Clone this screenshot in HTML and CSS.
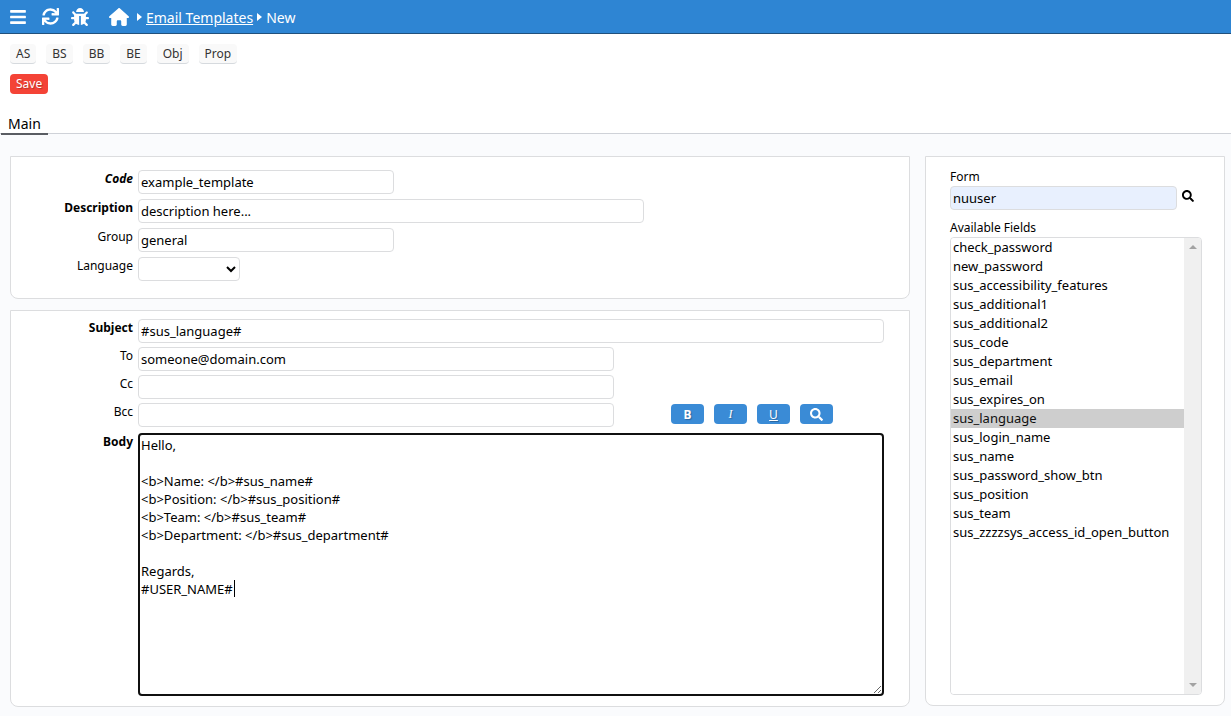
FILE: index.html
```html
<!DOCTYPE html>
<html lang="en">
<head>
<meta charset="utf-8">
<title>Email Templates</title>
<link rel="stylesheet" href="styles.css">
</head>
<body>
<header class="topbar">
  <button class="icon-btn menu" aria-label="Menu"><svg viewBox="0 0 448 512" width="16" height="18"><path d="M16 132h416c9 0 16-7 16-16V76c0-9-7-16-16-16H16C7 60 0 67 0 76v40c0 9 7 16 16 16zm0 160h416c9 0 16-7 16-16v-40c0-9-7-16-16-16H16c-9 0-16 7-16 16v40c0 9 7 16 16 16zm0 160h416c9 0 16-7 16-16v-40c0-9-7-16-16-16H16c-9 0-16 7-16 16v40c0 9 7 16 16 16z"/></svg></button>
  <button class="icon-btn refresh" aria-label="Refresh"><svg viewBox="0 0 512 512" width="17" height="17"><path d="M440.65 12.57l4 82.77A247.16 247.16 0 0 0 255.83 8C134.73 8 33.91 94.92 12.29 209.82A12 12 0 0 0 24.09 224h49.05a12 12 0 0 0 11.67-9.26 175.91 175.91 0 0 1 317-56.94l-101.46-4.86a12 12 0 0 0-12.57 12v47.41a12 12 0 0 0 12 12H500a12 12 0 0 0 12-12V12a12 12 0 0 0-12-12h-47.37a12 12 0 0 0-11.98 12.57zM255.83 432a175.61 175.61 0 0 1-146-77.8l101.8 4.87a12 12 0 0 0 12.57-12v-47.4a12 12 0 0 0-12-12H12a12 12 0 0 0-12 12V500a12 12 0 0 0 12 12h47.35a12 12 0 0 0 12-12.6l-4.15-82.57A247.17 247.17 0 0 0 255.83 504c121.11 0 221.93-86.92 243.55-201.82a12 12 0 0 0-11.8-14.18h-49.05a12 12 0 0 0-11.67 9.26A175.86 175.86 0 0 1 255.83 432z"/></svg></button>
  <button class="icon-btn bug" aria-label="Debug"><svg viewBox="0 0 512 512" width="18" height="18"><path d="M511.988 288.9c-.478 17.43-15.217 31.1-32.653 31.1H424v16c0 21.864-4.882 42.584-13.6 61.145l60.228 60.228c12.496 12.497 12.496 32.758 0 45.255-12.498 12.497-32.759 12.496-45.256 0l-54.736-54.736C345.886 467.965 314.351 480 280 480V236c0-6.627-5.373-12-12-12h-24c-6.627 0-12 5.373-12 12v244c-34.351 0-65.886-12.035-90.636-32.108l-54.736 54.736c-12.498 12.497-32.759 12.496-45.256 0-12.496-12.497-12.496-32.758 0-45.255l60.228-60.228C92.882 378.584 88 357.864 88 336v-16H32.666C15.23 320 .491 306.33.013 288.9-.484 270.816 14.028 256 32 256h56v-58.745l-46.628-46.628c-12.496-12.497-12.496-32.758 0-45.255 12.498-12.497 32.758-12.497 45.256 0L141.255 160h229.489l54.627-54.627c12.498-12.497 32.758-12.497 45.256 0 12.496 12.497 12.496 32.758 0 45.255L424 197.255V256h56c17.972 0 32.484 14.816 31.988 32.9zM257 0c-61.856 0-112 50.144-112 112h224C369 50.144 318.856 0 257 0z"/></svg></button>
  <nav class="crumbs" aria-label="Breadcrumb">
    <a class="home" href="#" aria-label="Home"><svg viewBox="0 0 576 512" width="20" height="18"><path d="M575.8 255.5c0 18-15 32.1-32 32.1h-32l.7 160.2c0 2.7-.2 5.4-.5 8.1V472c0 22.1-17.9 40-40 40H456c-1.1 0-2.2 0-3.3-.1c-1.4 .1-2.8 .1-4.2 .1H416 392c-22.1 0-40-17.9-40-40V448 384c0-17.7-14.3-32-32-32H256c-17.7 0-32 14.3-32 32v64 24c0 22.1-17.9 40-40 40H160 128.1c-1.5 0-3-.1-4.5-.2c-1.2 .1-2.4 .2-3.6 .2H104c-22.1 0-40-17.9-40-40V360c0-.9 0-1.9 .1-2.8V287.6H32c-18 0-32-14-32-32.1c0-9 3-17 10-24L266.4 8c7-7 15-8 22-8s15 2 21 7L564.8 231.5c8 7 12 15 11 24z"/></svg></a>
    <svg class="sep" viewBox="0 0 5 8" width="5" height="8"><path d="M0 0L5 4L0 8Z"/></svg>
    <a class="crumb" href="#">Email Templates</a>
    <svg class="sep" viewBox="0 0 5 8" width="5" height="8"><path d="M0 0L5 4L0 8Z"/></svg>
    <span class="crumb">New</span>
  </nav>
</header>

<div class="actions">
  <div class="tools">
    <button>AS</button>
    <button>BS</button>
    <button>BB</button>
    <button>BE</button>
    <button>Obj</button>
    <button>Prop</button>
  </div>
  <button class="save">Save</button>
</div>
<div class="tabs"><button class="tab">Main</button></div>

<main class="content">
  <form class="left">
    <section class="panel details">
      <label for="code" class="required code-label">Code</label>
      <input id="code" class="field medium" value="example_template">
      <label for="description" class="required">Description</label>
      <input id="description" class="field long" value="description here...">
      <label for="group">Group</label>
      <input id="group" class="field medium" value="general">
      <label for="language">Language</label>
      <select id="language" class="field short"><option></option></select>
    </section>
    <section class="panel message">
      <label for="subject" class="required">Subject</label>
      <input id="subject" class="field" value="#sus_language#">
      <label for="to">To</label>
      <input id="to" class="field address" value="someone@domain.com">
      <label for="cc">Cc</label>
      <input id="cc" class="field address">
      <label for="bcc">Bcc</label>
      <div class="bcc-row">
        <input id="bcc" class="field address">
        <div class="format">
          <button type="button" class="bold">B</button>
          <button type="button" class="italic">I</button>
          <button type="button" class="underline">U</button>
          <button type="button" aria-label="Preview"><svg viewBox="0 0 512 512" width="13" height="13"><path d="M505 442.7L405.3 343c-4.5-4.5-10.6-7-17-7H372c27.6-35.3 44-79.7 44-128C416 93.1 322.9 0 208 0S0 93.1 0 208s93.1 208 208 208c48.3 0 92.7-16.4 128-44v16.3c0 6.4 2.5 12.5 7 17l99.7 99.7c9.4 9.4 24.6 9.4 33.9 0l28.3-28.3c9.4-9.4 9.4-24.6.1-34zM208 336c-70.7 0-128-57.2-128-128 0-70.7 57.2-128 128-128 70.7 0 128 57.2 128 128 0 70.7-57.2 128-128 128z"/></svg></button>
        </div>
      </div>
      <label for="body" class="required body-label">Body</label>
      <div class="editor">
        <textarea id="body" spellcheck="false">Hello,

&lt;b&gt;Name: &lt;/b&gt;#sus_name#
&lt;b&gt;Position: &lt;/b&gt;#sus_position#
&lt;b&gt;Team: &lt;/b&gt;#sus_team#
&lt;b&gt;Department: &lt;/b&gt;#sus_department#

Regards,
#USER_NAME#</textarea>
        <span class="caret"></span>
      </div>
    </section>
  </form>
  <aside class="panel side">
    <label for="form">Form</label>
    <div class="lookup">
      <input id="form" class="field" value="nuuser">
      <button class="icon-btn find" aria-label="Find form"><svg viewBox="0 0 512 512" width="12" height="12"><path d="M505 442.7L405.3 343c-4.5-4.5-10.6-7-17-7H372c27.6-35.3 44-79.7 44-128C416 93.1 322.9 0 208 0S0 93.1 0 208s93.1 208 208 208c48.3 0 92.7-16.4 128-44v16.3c0 6.4 2.5 12.5 7 17l99.7 99.7c9.4 9.4 24.6 9.4 33.9 0l28.3-28.3c9.4-9.4 9.4-24.6.1-34zM208 336c-70.7 0-128-57.2-128-128 0-70.7 57.2-128 128-128 70.7 0 128 57.2 128 128 0 70.7-57.2 128-128 128z"/></svg></button>
    </div>
    <label for="fields">Available Fields</label>
    <div class="listbox">
      <select id="fields" size="16">
        <option>check_password</option>
        <option>new_password</option>
        <option>sus_accessibility_features</option>
        <option>sus_additional1</option>
        <option>sus_additional2</option>
        <option>sus_code</option>
        <option>sus_department</option>
        <option>sus_email</option>
        <option>sus_expires_on</option>
        <option selected>sus_language</option>
        <option>sus_login_name</option>
        <option>sus_name</option>
        <option>sus_password_show_btn</option>
        <option>sus_position</option>
        <option>sus_team</option>
        <option>sus_zzzzsys_access_id_open_button</option>
      </select>
      <div class="track" aria-hidden="true">
        <svg viewBox="0 0 8 4" width="8" height="4"><path d="M0 4L4 0L8 4Z"/></svg>
        <svg viewBox="0 0 8 4" width="8" height="4"><path d="M0 0L4 4L8 0Z"/></svg>
      </div>
    </div>
  </aside>
</main>
</body>
</html>
```
FILE: styles.css
```css
* { box-sizing: border-box; }

body {
  margin: 0;
  background: #fafbfd;
  color: #000;
  font: 12px/18px "Noto Sans", "Open Sans", sans-serif;
}

button, input, select, textarea {
  margin: 0;
  font-family: inherit;
  color: inherit;
}

.topbar {
  display: flex;
  align-items: center;
  height: 34px;
  padding: 0 10px;
  background: #2e85d3;
  border-bottom: 1px solid #20507c;
  color: #fff;
  font-size: 14px;
}

svg { display: block; fill: currentColor; }

.icon-btn { padding: 0; border: 0; background: none; }

.refresh { margin-left: 16px; }
.bug { margin-left: 12px; }

.crumbs {
  display: flex;
  align-items: center;
  gap: 4px;
  margin-left: 20px;
}
.crumbs a { color: inherit; }
.crumb { padding-top: 2px; }
.home { margin-right: 4px; }

.actions {
  display: flex;
  flex-direction: column;
  align-items: flex-start;
  gap: 10px;
  padding: 10px;
  background: #fff;
}
.tools { display: flex; gap: 10px; }
.tools button, .save {
  height: 20px;
  padding: 0 6px;
  border: 0;
  border-radius: 4px;
  font-size: 12px;
  line-height: 18px;
}
.tools button {
  background: #f9f9f9;
  border-bottom: 1px solid #d6dade;
  color: #333;
}
.save {
  background: #f44336;
  color: #fff;
  text-shadow: 1px 1px 1px #00000040;
}

.tabs {
  height: 30px;
  padding: 10px 1px 0;
  background: #fff;
  border-bottom: 1px solid #cfd2d8;
}
.tab {
  height: 21px;
  padding: 0 7px;
  border: 0;
  border-bottom: 2px solid #5a5d63;
  background: none;
  font-size: 14px;
  line-height: 18px;
}

.content {
  display: flex;
  align-items: flex-start;
  gap: 15px;
  padding: 22px 6px 9px 10px;
}
.left {
  flex: 1;
  min-width: 0;
  display: flex;
  flex-direction: column;
  gap: 11px;
}

.panel {
  background: #fff;
  border: 1px solid #dcdddf;
  border-radius: 0 0 8px 8px;
}
.details, .message {
  display: grid;
  grid-template-columns: 122px minmax(0, 1fr);
  column-gap: 5px;
}
.details { row-gap: 5px; padding: 13px 25px 17px 0; }
.message { row-gap: 4px; padding: 8px 25px 10px 0; }
.details label, .message label { text-align: right; }
.required { font-weight: bold; }
.code-label { font-style: italic; }

.field {
  width: 100%;
  height: 24px;
  padding: 1px 2px;
  background: #fff;
  border: 1px solid #dcdddf;
  border-radius: 4px;
  font-size: 13px;
}
.short { width: 102px; }
.medium { width: 256px; }
.long { max-width: 506px; }
.address { max-width: 476px; }

.bcc-row { display: flex; align-items: center; }
.bcc-row .field { flex: 0 1 476px; }
.format { display: flex; gap: 10px; margin: 0 0 2px 57px; }
.format button {
  display: flex;
  align-items: center;
  justify-content: center;
  width: 33px;
  height: 20px;
  padding: 0;
  border: 0;
  border-radius: 4px;
  background: #3a8bd6;
  color: #fff;
  font-size: 12px;
  text-shadow: 1px 1px 1px #00000040;
}
.format .bold { font-weight: bold; }
.format .italic { font-family: "Liberation Serif", serif; font-style: italic; }
.format .underline { text-decoration: underline; }

.body-label, .editor { margin-top: 2px; }
.editor { position: relative; }
textarea {
  display: block;
  width: 100%;
  height: 263px;
  padding: 1px;
  border: 2px solid #101010;
  border-radius: 4px;
  font-size: 13px;
  line-height: 18px;
}
.caret {
  position: absolute;
  top: 147px;
  left: 96px;
  width: 1px;
  height: 17px;
  background: #000;
}

.side {
  display: flex;
  flex-direction: column;
  flex: 0 0 300px;
  padding: 11px 22px 10px 24px;
}
.lookup {
  display: flex;
  gap: 5px;
  align-items: center;
  margin-bottom: 9px;
}
.lookup .field { flex: 0 0 227px; background: #e8f0fe; }
.find { margin-bottom: 4px; }

.listbox {
  display: flex;
  height: 458px;
  border: 1px solid #dcdddf;
  border-radius: 4px;
  overflow: hidden;
}
.listbox select {
  flex: 1;
  min-width: 0;
  height: 100%;
  padding: 0;
  border: 0;
  background: #fff;
  font-size: 13px;
}
.listbox option {
  min-height: 19px;
  padding: 0 2px;
  line-height: 19px;
}
.track {
  display: flex;
  flex-direction: column;
  justify-content: space-between;
  align-items: center;
  width: 17px;
  padding: 7px 0;
  background: #f0f0f0;
  color: #a3a3a3;
}
```
